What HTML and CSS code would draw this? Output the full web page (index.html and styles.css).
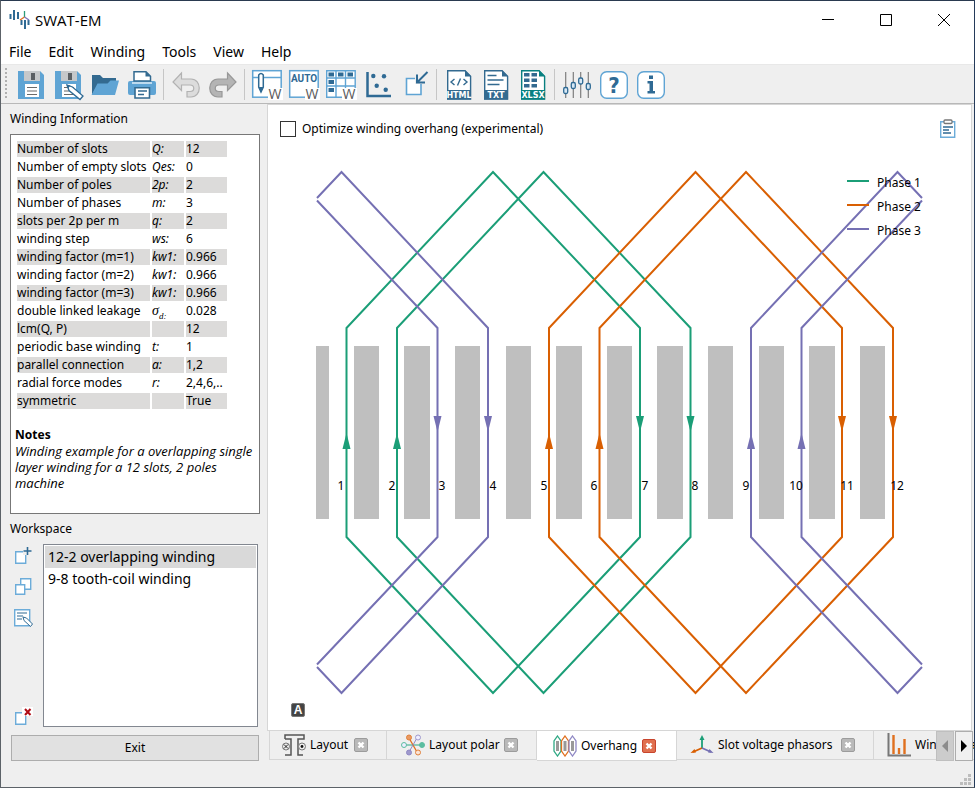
FILE: index.html
```html
<!DOCTYPE html>
<html lang="en">
<head>
<meta charset="utf-8">
<title>SWAT-EM</title>
<link rel="stylesheet" href="styles.css">
</head>
<body>
<svg class="defs" aria-hidden="true">
  <defs>
    <g id="close-glyph">
      <rect x="0.5" y="0.5" width="13" height="13" rx="1.5"/>
      <path d="M4.500 4.500l5 5M9.500 4.500l-5 5" stroke="#fff" stroke-width="2.400"/>
    </g>
    <g id="floppy">
      <path d="M6 6h22l4 4v24H6z" fill="#5fa4d4"/>
      <path d="M12 6h16v10H12z" fill="#c6c8ca"/>
      <path d="M19 8h4v7h-4z" fill="#5b5f63"/>
      <path d="M13 19h14v13H13z" fill="#fff"/>
      <path d="M15 22.500h10M15 26h10M15 29.500h10" stroke="#6a6a6a" stroke-width="1.200"/>
    </g>
  </defs>
</svg>
<div class="window">
  <header class="titlebar">
    <svg class="logo" viewBox="0 0 22 22" width="22" height="22" aria-hidden="true">
      <path d="M1.500 5v5M5 1v10M9 3v7" stroke="#2f6a94" stroke-width="2"/>
      <path d="M12.500 11v5M16 11v9M19.500 11v5" stroke="#2f6a94" stroke-width="2"/>
      <path d="M15.500 8V2" stroke="#2a9d78" stroke-width="1.300"/>
      <path d="M15.500 8l-4.500 3" stroke="#e0701f" stroke-width="1.300"/>
      <path d="M15.500 8l4.500 3" stroke="#7b73b8" stroke-width="1.300"/>
    </svg>
    <h1>SWAT-EM</h1>
    <div class="winctl">
      <button type="button" aria-label="Minimize"><svg viewBox="0 0 12 12" width="12" height="12"><path d="M0 5.500h12"/></svg></button>
      <button type="button" aria-label="Maximize"><svg viewBox="0 0 12 12" width="12" height="12"><path d="M.5.5h11v11H.5z"/></svg></button>
      <button type="button" aria-label="Close"><svg viewBox="0 0 12 12" width="12" height="12"><path d="M0 0l12 12M12 0L0 12"/></svg></button>
    </div>
  </header>
  <nav class="menubar">
    <button type="button">File</button><button type="button">Edit</button><button type="button">Winding</button><button type="button">Tools</button><button type="button">View</button><button type="button">Help</button>
  </nav>
  <div class="toolbar" role="toolbar" aria-label="Main">
    <span class="grip"></span>
    <button type="button" aria-label="Save"><svg viewBox="0 0 37 38"><use href="#floppy"/></svg></button>
    <button type="button" aria-label="Save as"><svg viewBox="0 0 37 38"><use href="#floppy"/><path d="M18 20l5.500 2 10.500 9-3 3.500-11-9z" fill="#fff" stroke="#2f6a94" stroke-width="1.300"/><path d="M17.500 19.500l4 1-2.500 3z" fill="#2f6a94"/></svg></button>
    <button type="button" aria-label="Open"><svg viewBox="0 0 37 38"><path d="M6 10h8l3 3h13v6H12L6 30z" fill="#336a90"/><path d="M11.500 18.500h10l3-3H33L29 30H5.500z" fill="#5fa4d4"/></svg></button>
    <button type="button" aria-label="Print"><svg viewBox="0 0 37 38"><rect x="5" y="16" width="28" height="14" rx="2" fill="#5fa4d4"/><path d="M11 16V6.700h12l4.500 4.500V16z" fill="#fff" stroke="#336a90" stroke-width="1.500"/><path d="M22.500 6.500v5h5z" fill="#336a90"/><path d="M9 18h20" stroke="#fff" stroke-width="1.200"/><path d="M12 22.800h14.500V33H12z" fill="#fff" stroke="#336a90" stroke-width="1.600"/><path d="M15 26h9M15 29.500h6" stroke="#336a90" stroke-width="1.500"/></svg></button>
    <span class="sep"></span>
    <button type="button" aria-label="Undo"><svg viewBox="0 0 37 38"><path d="M14.500 8L6 17l8.500 8.500v-5.500H23c5 0 5 6.500 0 6.500h-3V32h4c11 0 11-18 0-18h-9.500z" fill="#dcdcdc" stroke="#b2b2b2" stroke-width="1.200"/></svg></button>
    <button type="button" aria-label="Redo"><svg viewBox="0 0 37 38"><path d="M23.500 8L32 17l-8.500 8.500v-5.500H15c-5 0-5 6.500 0 6.500h3V32h-4c-11 0-11-18 0-18h9.500z" fill="#b4b4b4" stroke="#989898" stroke-width="1.200"/></svg></button>
    <span class="sep"></span>
    <button type="button" aria-label="Edit winding"><svg viewBox="0 0 37 38"><rect x="4.700" y="5.700" width="28.500" height="26.500" fill="#fff" stroke="#5fa4d4" stroke-width="1.500"/><path d="M5 12.500h28" stroke="#5fa4d4" stroke-width="1.500"/><path d="M10.700 10q2.300-3 4.600 0v12l-2.300 5-2.300-5z" fill="#fff" stroke="#2f6a94" stroke-width="1.500"/><path d="M10.700 22h4.600L13 27.500z" fill="#2f6a94"/><path d="M20 23h15v12H20z" fill="#fff"/><text x="20.500" y="34" class="w">W</text></svg></button>
    <button type="button" aria-label="Auto winding"><svg viewBox="0 0 37 38"><rect x="4.700" y="5.700" width="28.500" height="26.500" fill="#fff" stroke="#5fa4d4" stroke-width="1.500"/><text x="19" y="17" class="auto">AUTO</text><path d="M20 23h15v12H20z" fill="#fff"/><text x="20.500" y="34" class="w">W</text></svg></button>
    <button type="button" aria-label="Winding table"><svg viewBox="0 0 37 38"><path d="M4.700 5.700h28.500v26.500H4.700zM4.700 13h28.500M4.700 21h28.500M14 5.700v26.500M23.500 5.700v26.500" fill="#fff" stroke="#5fa4d4" stroke-width="1.400"/><path d="M6.500 7.500H12v4H6.500zM16 7.500h5.500v4H16zM25.500 7.500H31v4h-5.500zM6.500 15H12v4H6.500zM6.500 23H12v4H6.500z" fill="#2f6a94"/><path d="M20 23h15v12H20z" fill="#fff"/><text x="20.500" y="34" class="w">W</text></svg></button>
    <button type="button" aria-label="Scatter"><svg viewBox="0 0 37 38"><path d="M8.500 7v24H32" fill="none" stroke="#2f6a94" stroke-width="2.500"/><g fill="#2f6a94"><circle cx="14.300" cy="11" r="2.200"/><circle cx="25" cy="11.300" r="2.200"/><circle cx="17.700" cy="20.700" r="2.200"/><circle cx="26.700" cy="24.700" r="2.200"/></g></svg></button>
    <button type="button" aria-label="Import"><svg viewBox="0 0 37 38"><path d="M10.500 13.500H25v16H10.500z" fill="#fff" stroke="#5fa4d4" stroke-width="1.600"/><path d="M19 6h13v13H19z" fill="#efefef"/><path d="M31.500 7L21.500 17M21 9.500v8h8" fill="none" stroke="#2f6a94" stroke-width="2"/></svg></button>
    <span class="sep"></span>
    <button type="button" aria-label="Export HTML"><svg viewBox="0 0 37 38"><path d="M7.700 5.700H25l5.600 5.600V34H7.700z" fill="#fff" stroke="#336a90" stroke-width="1.400"/><path d="M25 5v6.500h6z" fill="#336a90"/><path d="M7 25h24v9.500H7z" fill="#336a90"/><path d="M14.500 14L11 17l3.500 3M23.500 14l3.500 3-3.500 3M20.500 13.500l-3 7" fill="none" stroke="#336a90" stroke-width="1.400"/><text x="19" y="32.500" class="ext">HTML</text></svg></button>
    <button type="button" aria-label="Export TXT"><svg viewBox="0 0 37 38"><path d="M7.700 5.700H25l5.600 5.600V34H7.700z" fill="#fff" stroke="#336a90" stroke-width="1.400"/><path d="M25 5v6.500h6z" fill="#336a90"/><path d="M7 25h24v9.500H7z" fill="#336a90"/><path d="M10.500 10.500h9M10.500 15h16M10.500 19.500h12" stroke="#336a90" stroke-width="1.600"/><text x="19" y="33" class="ext">TXT</text></svg></button>
    <button type="button" aria-label="Export XLSX"><svg viewBox="0 0 37 38"><path d="M7.700 5.700H25l5.600 5.600V34H7.700z" fill="#fff" stroke="#088080" stroke-width="1.400"/><path d="M25 5v6.500h6z" fill="#088080"/><path d="M7 25h24v9.500H7z" fill="#088080"/><path d="M10 8h5.500v3.500H10zM17.500 8H23v3.500h-5.500zM10 13.500h5.500V17H10zM17.500 13.500H23V17h-5.500zM10 19h5.500v3.500H10zM17.500 19H23v3.500h-5.500z" fill="#336a90"/><text x="19" y="32.500" class="ext">XLSX</text></svg></button>
    <span class="sep"></span>
    <button type="button" aria-label="Settings"><svg viewBox="0 0 37 38"><path d="M7.700 7v26M15.300 7v26M22.700 7v26M30.300 7v26" stroke="#7d7d7d" stroke-width="1.200"/><g fill="#d8e8f4" stroke="#2f6a94" stroke-width="1.300"><rect x="5.700" y="22.500" width="4" height="6" rx="1.500"/><rect x="13.300" y="17.500" width="4" height="6" rx="1.500"/><rect x="20.700" y="13" width="4" height="6" rx="1.500"/><rect x="28.300" y="18.500" width="4" height="6" rx="1.500"/></g></svg></button>
    <button type="button" aria-label="Help"><svg viewBox="0 0 37 38"><rect x="5.700" y="6.700" width="26.600" height="26.600" rx="6" fill="#fff" stroke="#5fa4d4" stroke-width="1.400"/><text x="19" y="28" class="sign">?</text></svg></button>
    <button type="button" aria-label="Info"><svg viewBox="0 0 37 38"><rect x="5.700" y="6.700" width="26.600" height="26.600" rx="6" fill="#fff" stroke="#5fa4d4" stroke-width="1.400"/><path d="M17 10.500h4v3.500h-4zM15.500 16H21v10h2v2.500h-7.500V26h2v-7.500h-2z" fill="#2f6a94"/></svg></button>
  </div>

  <main class="content">
    <aside class="side">
      <h2>Winding Information</h2>
      <section class="info">
        <table>
          <tbody>
            <tr><td>Number of slots</td><td>Q:</td><td>12</td></tr>
            <tr><td>Number of empty slots</td><td>Qes:</td><td>0</td></tr>
            <tr><td>Number of poles</td><td>2p:</td><td>2</td></tr>
            <tr><td>Number of phases</td><td>m:</td><td>3</td></tr>
            <tr><td>slots per 2p per m</td><td>q:</td><td>2</td></tr>
            <tr><td>winding step</td><td>ws:</td><td>6</td></tr>
            <tr><td>winding factor (m=1)</td><td>kw1:</td><td>0.966</td></tr>
            <tr><td>winding factor (m=2)</td><td>kw1:</td><td>0.966</td></tr>
            <tr><td>winding factor (m=3)</td><td>kw1:</td><td>0.966</td></tr>
            <tr><td>double linked leakage</td><td class="sigma">σ<sub>d:</sub></td><td>0.028</td></tr>
            <tr><td>lcm(Q, P)</td><td></td><td>12</td></tr>
            <tr><td>periodic base winding</td><td>t:</td><td>1</td></tr>
            <tr><td>parallel connection</td><td>a:</td><td>1,2</td></tr>
            <tr><td>radial force modes</td><td>r:</td><td>2,4,6,..</td></tr>
            <tr><td>symmetric</td><td></td><td>True</td></tr>
          </tbody>
        </table>
        <h3>Notes</h3>
        <p>Winding example for a overlapping single layer winding for a 12 slots, 2 poles machine</p>
      </section>
      <h2>Workspace</h2>
      <section class="workspace">
        <div class="tools">
          <button type="button" aria-label="New"><svg viewBox="0 0 20 20"><path d="M2.700 5.700h10v11.600h-10z" fill="#fff" stroke="#6cacd9" stroke-width="1.400"/><path d="M10 0h10v9h-10z" fill="#efefef"/><path d="M14.500 1v8M10.500 5h8" stroke="#2f6a94" stroke-width="1.600"/></svg></button>
          <button type="button" aria-label="Duplicate"><svg viewBox="0 0 20 20"><g fill="#fff" stroke="#6cacd9" stroke-width="1.400"><path d="M7.700 1.700h10v10.600h-10z"/><path d="M2.700 7.700h9v9.600h-9z"/></g></svg></button>
          <button type="button" aria-label="Edit notes"><svg viewBox="0 0 20 20"><path d="M1.700 1.700h15v16h-15z" fill="#fff" stroke="#6cacd9" stroke-width="1.400"/><path d="M4 5h10M4 8h6M4 11h5" stroke="#2f6a94" stroke-width="1.200"/><path d="M10 9l3.500 1 6 6-2 2.500-6.500-6z" fill="#fff" stroke="#2f6a94"/></svg></button>
          <button type="button" class="remove" aria-label="Delete"><svg viewBox="0 0 20 20"><path d="M2.700 5.700h10v11.600h-10z" fill="#fff" stroke="#6cacd9" stroke-width="1.400"/><path d="M9 0h11v9H9z" fill="#fff"/><path d="M12 2l5.500 6M17.500 2L12 8" stroke="#b00d17" stroke-width="2"/></svg></button>
        </div>
        <ul>
          <li class="selected"><button type="button">12-2 overlapping winding</button></li>
          <li><button type="button">9-8 tooth-coil winding</button></li>
        </ul>
      </section>
      <button type="button" class="exit">Exit</button>
    </aside>

    <section class="work">
      <div class="pane">
        <div class="options">
          <input type="checkbox" id="optimize"><label for="optimize">Optimize winding overhang (experimental)</label>
          <button type="button" aria-label="Copy to clipboard"><svg viewBox="0 0 18 20" width="18" height="20"><path d="M1.700 2.700h14v15.600h-14z" fill="#fff" stroke="#6cacd9" stroke-width="1.400"/><rect x="5" y="1" width="8" height="3.500" rx="1" fill="#fff" stroke="#777" stroke-width="1.300"/><path d="M4 8h10M4 11h6M4 14h8" stroke="#2f6a94" stroke-width="1.300"/></svg></button>
        </div>
        <svg class="plot" viewBox="268 153 703 547" role="img" aria-label="Winding overhang">
          <g fill="#bfbfbf">
            <path d="M316 346h13v173h-13zM354 346h25v173h-25zM404 346h26v173h-26zM455 346h25v173h-25zM506 346h25v173h-25zM556 346h26v173h-26zM607 346h25v173h-25zM657 346h26v173h-26zM708 346h25v173h-25zM759 346h25v173h-25zM809 346h26v173h-26zM860 346h25v173h-25z"/>
          </g>
          <g fill="none" stroke-width="2">
            <path stroke="#1b9e77" d="M346.500 328L493 172l147 156v209L493 693 346.500 537zM397 328l146.500-156L690.500 328v209l-147 156L397 537z"/>
            <path stroke="#d95f02" d="M549 328l146.500-156L842 328v209L695.500 693 549 537zM599.500 328L746 172l147 156v209L746 693 599.500 537z"/>
            <path stroke="#7570b3" d="M317 200.500L437.500 328v209L317 664.500M317 198l24.500-26L488 328v209L341.500 693 317 667M922 198l-24.500-26L751 328v209l146.500 156 24.500-26M922 200.500L801.500 328v209L922 664.500"/>
          </g>
          <g fill="#1b9e77"><path d="M346.500 433l4 16h-8zM397 433l4 16h-8zM640 432l4-16h-8zM690.500 432l4-16h-8z"/></g>
          <g fill="#d95f02"><path d="M549 433l4 16h-8zM599.500 433l4 16h-8zM842 432l4-16h-8zM893 432l4-16h-8z"/></g>
          <g fill="#7570b3"><path d="M751 433l4 16h-8zM801.500 433l4 16h-8zM437.500 432l4-16h-8zM488 432l4-16h-8z"/></g>
          <g class="num">
            <text x="341" y="490">1</text><text x="392" y="490">2</text><text x="442" y="490">3</text><text x="493" y="490">4</text><text x="544" y="490">5</text><text x="594" y="490">6</text><text x="645" y="490">7</text><text x="695" y="490">8</text><text x="746" y="490">9</text><text x="796" y="490">10</text><text x="847" y="490">11</text><text x="897" y="490">12</text>
          </g>
          <g stroke-width="2"><path stroke="#1b9e77" d="M847 181h22"/><path stroke="#d95f02" d="M847 205h22"/><path stroke="#7570b3" d="M847 229h22"/></g>
          <text x="877" y="187">Phase 1</text><text x="877" y="211">Phase 2</text><text x="877" y="235">Phase 3</text>
        </svg>
        <div class="foot"><button type="button" class="auto-range" aria-label="Auto range">A</button></div>
      </div>
      <div class="tabs">
        <div class="tab layout">
          <button type="button"><svg viewBox="0 0 24 22" width="24" height="22"><path d="M3 5V1h19v4h-6v16h5M3 5h6v16H3" fill="none" stroke="#555" stroke-width="1.500"/><g fill="#eee" stroke="#777"><circle cx="4" cy="12.500" r="3.500"/><circle cx="20" cy="12.500" r="3.500"/></g><path d="M2 10.500l4 4M6 10.500l-4 4" stroke="#222"/><circle cx="20" cy="12.500" r="1.400" fill="#111"/></svg>Layout</button>
          <button type="button" class="x" aria-label="Close Layout"><svg viewBox="0 0 14 14" width="14" height="14"><use href="#close-glyph"/></svg></button>
        </div>
        <div class="tab polar">
          <button type="button"><svg viewBox="0 0 24 22" width="24" height="22"><path d="M3 11h18" stroke="#2fa884"/><path d="M8 4l8 14" stroke="#e0701f" stroke-width="1.300"/><path d="M16 4L8 18" stroke="#8f88c4"/><g stroke-width="1"><circle cx="3" cy="11" r="2.500" fill="#eef" stroke="#5bbda0"/><circle cx="21" cy="11" r="2.500" fill="#5bbda0" stroke="#5bbda0"/><circle cx="8" cy="3.500" r="2.500" fill="#e99a64" stroke="#e0803a"/><circle cx="17" cy="18.500" r="2.500" fill="#fbe4d5" stroke="#e0803a"/><circle cx="17" cy="3.500" r="2.500" fill="#eef" stroke="#9f99cc"/><circle cx="8" cy="18.500" r="2.500" fill="#9f99cc" stroke="#8f88c4"/></g></svg>Layout polar</button>
          <button type="button" class="x" aria-label="Close Layout polar"><svg viewBox="0 0 14 14" width="14" height="14"><use href="#close-glyph"/></svg></button>
        </div>
        <div class="tab overhang active">
          <button type="button"><svg viewBox="0 0 24 22" width="24" height="22"><path d="M3 6h3v10H3zM10.500 6h3v10h-3zM18 6h3v10h-3z" fill="#999"/><g fill="none" stroke-width="1.300"><path d="M4.500 1L8 6v10l-3.500 5L1 16V6z" stroke="#2fa884"/><path d="M12 1l3.500 5v10L12 21l-3.500-5V6z" stroke="#e0701f"/><path d="M19.500 1L23 6v10l-3.500 5L16 16V6z" stroke="#8f88c4"/></g></svg>Overhang</button>
          <button type="button" class="x" aria-label="Close Overhang"><svg viewBox="0 0 14 14" width="14" height="14"><use href="#close-glyph"/></svg></button>
        </div>
        <div class="tab phasors">
          <button type="button"><svg viewBox="0 0 24 22" width="24" height="22"><path d="M12 14V3" stroke="#1b9e77" stroke-width="1.800"/><path d="M12 1l2.500 5h-5z" fill="#1b9e77"/><path d="M12 14l-9 4" stroke="#d95f02" stroke-width="1.800"/><path d="M.5 19l4-4 1.500 3.500z" fill="#d95f02"/><path d="M12 14l9 4" stroke="#7570b3" stroke-width="1.800"/><path d="M23.500 19l-4-4-1.500 3.500z" fill="#7570b3"/></svg>Slot voltage phasors</button>
          <button type="button" class="x" aria-label="Close Slot voltage phasors"><svg viewBox="0 0 14 14" width="14" height="14"><use href="#close-glyph"/></svg></button>
        </div>
        <div class="tab factor">
          <button type="button"><svg viewBox="0 0 24 24" width="24" height="24"><path d="M1.500 0v22.500H24" fill="none" stroke="#777" stroke-width="2"/><path d="M6.500 2v19M12 15v6M17.500 6v15" stroke="#e0701f" stroke-width="2.400"/></svg>Winding factor</button>
        </div>
        <div class="scroll">
          <button type="button" class="off" aria-label="Previous tabs"><svg viewBox="0 0 6 12" width="6" height="12"><path d="M6 0v12L0 6z" fill="#8c8c8c"/></svg></button>
          <button type="button" aria-label="Next tabs"><svg viewBox="0 0 6 12" width="6" height="12"><path d="M0 0v12l6-6z"/></svg></button>
        </div>
      </div>
    </section>
  </main>
  <footer class="status">
    <svg viewBox="0 0 12 12" width="12" height="12" aria-hidden="true"><path d="M8 0h3v3H8zM4 4h3v3H4zM8 4h3v3H8zM0 8h3v3H0zM4 8h3v3H4zM8 8h3v3H8z" fill="#bdbdbd"/></svg>
  </footer>
</div>
</body>
</html>
```
FILE: styles.css
```css
* { box-sizing: border-box; }
body {
  margin: 0;
  color: #000;
  font: 12px/16px "Noto Sans", sans-serif;
}
button {
  margin: 0;
  padding: 0;
  border: 0;
  background: none;
  color: inherit;
  font: inherit;
}
svg { display: block; }
h1, h2, h3, p, ul { margin: 0; padding: 0; font-weight: normal; }
.defs { position: absolute; width: 0; height: 0; }

.window {
  display: flex;
  flex-direction: column;
  min-height: 100vh;
  border: 1px solid #5c6268;
  border-top-color: #2a3a50;
  border-right-color: #243a5a;
  background: #efefef;
}

.titlebar {
  display: flex;
  align-items: center;
  height: 38px;
  padding-left: 8px;
  background: #fff;
}
.logo { margin-right: 4px; }
h1 { flex: 1; font: 15px/20px "Open Sans", "Noto Sans", sans-serif; }
.winctl { display: flex; margin-right: 1px; }
.winctl button { width: 58px; height: 36px; display: grid; place-items: center; }
.winctl path { fill: none; stroke: #000; }

.menubar {
  display: flex;
  height: 26px;
  padding-left: 8px;
  gap: 17px;
  background: #fff;
  border-bottom: 1px solid #e8e8e8;
  font: 14px/24px "Noto Sans", sans-serif;
}

.toolbar {
  display: flex;
  height: 39px;
  border-bottom: 1px solid #b8b8b8;
}
.grip {
  width: 2px;
  margin: 3px 5px 4px 4px;
  background: repeating-linear-gradient(#b0b0b0 0 2px, transparent 2px 4px);
}
.toolbar button, .toolbar svg { width: 37px; height: 38px; }
.sep { width: 7px; padding: 4px 3px; }
.sep::before { content: ""; display: block; height: 31px; width: 1px; background: #c6c6c6; }
.w { font: 14px "Open Sans", sans-serif; fill: #5a5a5a; }
.auto { font: bold 10px Roboto, "Open Sans", sans-serif; fill: #2f6a94; text-anchor: middle; }
.ext { font: bold 8px "DejaVu Sans", sans-serif; fill: #fff; text-anchor: middle; }
.sign { font: bold 22px "DejaVu Sans Condensed", sans-serif; fill: #2f6a94; text-anchor: middle; }

.content { display: flex; flex: 1; }
.side {
  display: flex;
  flex-direction: column;
  flex: 0 0 266px;
  padding: 0 7px 0 9px;
}
h2 { font-size: 12px; line-height: 30px; }
.info {
  flex: 2 0 380px;
  padding: 4px;
  border: 1px solid #777;
  background: #fff;
}
table { border-spacing: 2px; }
td { height: 16px; padding: 0; line-height: 16px; white-space: nowrap; }
td:nth-child(1) { width: 133px; }
td:nth-child(2) { width: 32px; font-style: italic; }
td:nth-child(3) { width: 41px; }
tr:nth-child(odd) td { background: #dcdbda; }
td.sigma { font-family: "Liberation Serif", serif; font-size: 14px; }
sub { font-size: 9px; line-height: 0; }
h3 { margin-top: 16px; font-size: 12px; font-weight: bold; }
.info p { font: italic 13px/16px "Open Sans", "Noto Sans", sans-serif; }

.workspace { display: flex; flex: 1 0 183px; gap: 10px; margin-right: 2px; }
.tools { display: flex; flex-direction: column; gap: 11px; padding: 2px 0 0 3px; }
.tools svg { width: 20px; height: 20px; }
.remove { margin-top: auto; }
.workspace ul {
  flex: 1;
  padding: 1px;
  border: 1px solid #828790;
  background: #fff;
  list-style: none;
  font: 14px/22px "Noto Sans", sans-serif;
}
.workspace li { height: 22px; padding-left: 3px; }
.workspace .selected { background: #d9d9d9; }
.exit {
  height: 26px;
  margin: 8px 1px 0 1px;
  border: 1px solid #adadad;
  background: #e1e1e1;
}

.work { display: flex; flex: 1; flex-direction: column; min-width: 0; }
.pane {
  display: flex;
  flex: 1;
  flex-direction: column;
  margin-right: 2px;
  border: 1px solid #d6d6d6;
  background: #fff;
}
.options { display: flex; align-items: center; height: 48px; padding: 0 14px 0 12px; }
.options input {
  width: 16px;
  height: 16px;
  margin: 0 6px 0 0;
  appearance: none;
  border: 1px solid #333;
  background: #fff;
}
.options button { margin-left: auto; }
.plot { flex: 1 1 0; width: 100%; height: 0; min-height: 300px; }
.plot text { font: 12px "Noto Sans", sans-serif; }
.plot .num text { text-anchor: middle; }
.foot { display: flex; height: 30px; padding: 3px 0 0 23px; }
.auto-range {
  width: 14px;
  height: 14px;
  border: 1px solid #777;
  border-radius: 2px;
  background: #444;
  color: #fff;
  font: bold 12px/12px "Liberation Sans", sans-serif;
}

.tabs {
  position: relative;
  display: flex;
  align-items: flex-start;
  height: 30px;
  padding-left: 2px;
  overflow: hidden;
}
.tab {
  display: flex;
  flex: none;
  align-items: center;
  justify-content: space-between;
  height: 29px;
  padding: 0 18px 0 12px;
  border: 1px solid #d6d6d6;
  border-width: 0 1px 1px 0;
  white-space: nowrap;
}
.tab button { display: flex; align-items: center; gap: 4px; }
.tab.layout { width: 118px; border-left-width: 1px; }
.tab.polar { width: 150px; padding-left: 14px; }
.tab.overhang { width: 140px; height: 30px; padding: 0 20px 0 16px; background: #fff; }
.tab.phasors { width: 197px; padding-left: 13px; }
.tab.factor { width: 160px; padding-left: 13px; }
.x use { fill: #b9b9b9; stroke: #9c9c9c; }
.active .x use { fill: #e0704f; stroke: #c8452d; }
.scroll { position: absolute; right: 1px; top: 0; display: flex; gap: 1px; background: #efefef; }
.scroll button {
  display: grid;
  place-items: center;
  width: 18px;
  height: 30px;
  border: 1px solid #adadad;
  background: #f0f0f0;
}
.scroll .off { background: #ccc; border-color: #bfbfbf; }

.status { display: flex; justify-content: flex-end; align-items: flex-end; height: 26px; padding: 0 2px 1px; }
```
